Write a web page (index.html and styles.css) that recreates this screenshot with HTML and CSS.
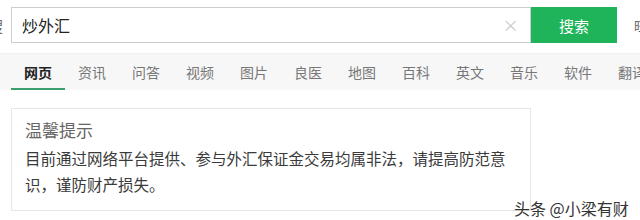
FILE: index.html
```html
<!DOCTYPE html>
<html lang="zh">
<head>
<meta charset="utf-8">
<link rel="stylesheet" href="styles.css">
</head>
<body>
<div class="top">
  <div class="cut-left"><span>搜</span></div>
  <div class="search">
    <span class="query">炒外汇</span>
    <span class="clear">×</span>
  </div>
  <div class="btn">搜索</div>
  <div class="cut-right">旺</div>
</div>
<div class="nav">
  <div class="item active">网页</div>
  <div class="item">资讯</div>
  <div class="item">问答</div>
  <div class="item">视频</div>
  <div class="item">图片</div>
  <div class="item">良医</div>
  <div class="item">地图</div>
  <div class="item">百科</div>
  <div class="item">英文</div>
  <div class="item">音乐</div>
  <div class="item">软件</div>
  <div class="item">翻译</div>
</div>
<div class="card">
  <div class="title">温馨提示</div>
  <div class="body">目前通过网络平台提供、参与外汇保证金交易均属非法，请提高防范意识，谨防财产损失。</div>
</div>
<div class="mark">头条 @小梁有财</div>
</body>
</html>
```
FILE: styles.css
```css
html, body {
  margin: 0;
  padding: 0;
  background: #fff;
  width: 640px;
  height: 220px;
  overflow: hidden;
  font-family: "Noto Sans CJK SC", "Microsoft YaHei", sans-serif;
  position: relative;
}
.top {
  display: flex;
  align-items: center;
  padding-top: 7px;
  height: 36px;
  white-space: nowrap;
}
.top > div {
  flex-shrink: 0;
}
.cut-left {
  width: 11px;
  overflow: hidden;
  font-size: 15px;
  color: #666;
}
.cut-left span {
  display: inline-block;
  margin-left: -12px;
}
.search {
  box-sizing: border-box;
  width: 520px;
  height: 36px;
  border: 1px solid #cdcdcd;
  display: flex;
  align-items: center;
  justify-content: space-between;
  padding: 0 11px 0 10px;
}
.query {
  font-size: 16px;
  color: #222;
}
.clear {
  font-size: 20px;
  color: #c4c4c4;
  font-family: "DejaVu Sans", sans-serif;
  font-weight: 300;
}
.btn {
  width: 86px;
  height: 36px;
  background: #1fb45a;
  color: #fff;
  font-size: 15px;
  display: flex;
  align-items: center;
  justify-content: center;
}
.cut-right {
  margin-left: 17px;
  font-size: 13px;
  color: #666;
}
.nav {
  margin-top: 10px;
  height: 36px;
  background: #f7f7f7;
  border-top: 1px solid #f1f1f1;
  display: flex;
  padding-left: 11px;
  white-space: nowrap;
}
.item {
  flex: 0 0 54px;
  box-sizing: border-box;
  height: 36px;
  display: flex;
  align-items: center;
  justify-content: center;
  font-size: 14px;
  color: #777;
  border-bottom: 2px solid transparent;
  padding-top: 2px;
}
.item.active {
  color: #222;
  font-weight: bold;
  border-bottom-color: #3a9f6c;
}
.card {
  box-sizing: border-box;
  margin: 18px 0 0 11px;
  width: 520px;
  height: 103px;
  border: 1px solid #e6e6e6;
  padding: 9px 10px 0 13px;
}
.title {
  font-size: 17px;
  line-height: 24px;
  color: #666;
}
.body {
  margin-top: 3px;
  font-size: 15.5px;
  line-height: 26px;
  color: #3a3a3a;
}
.mark {
  position: absolute;
  left: 514px;
  top: 197px;
  font-size: 16px;
  line-height: 22px;
  color: #333;
  white-space: nowrap;
  text-shadow: 0 0 2px #fff, 0 0 2px #fff;
}
```
